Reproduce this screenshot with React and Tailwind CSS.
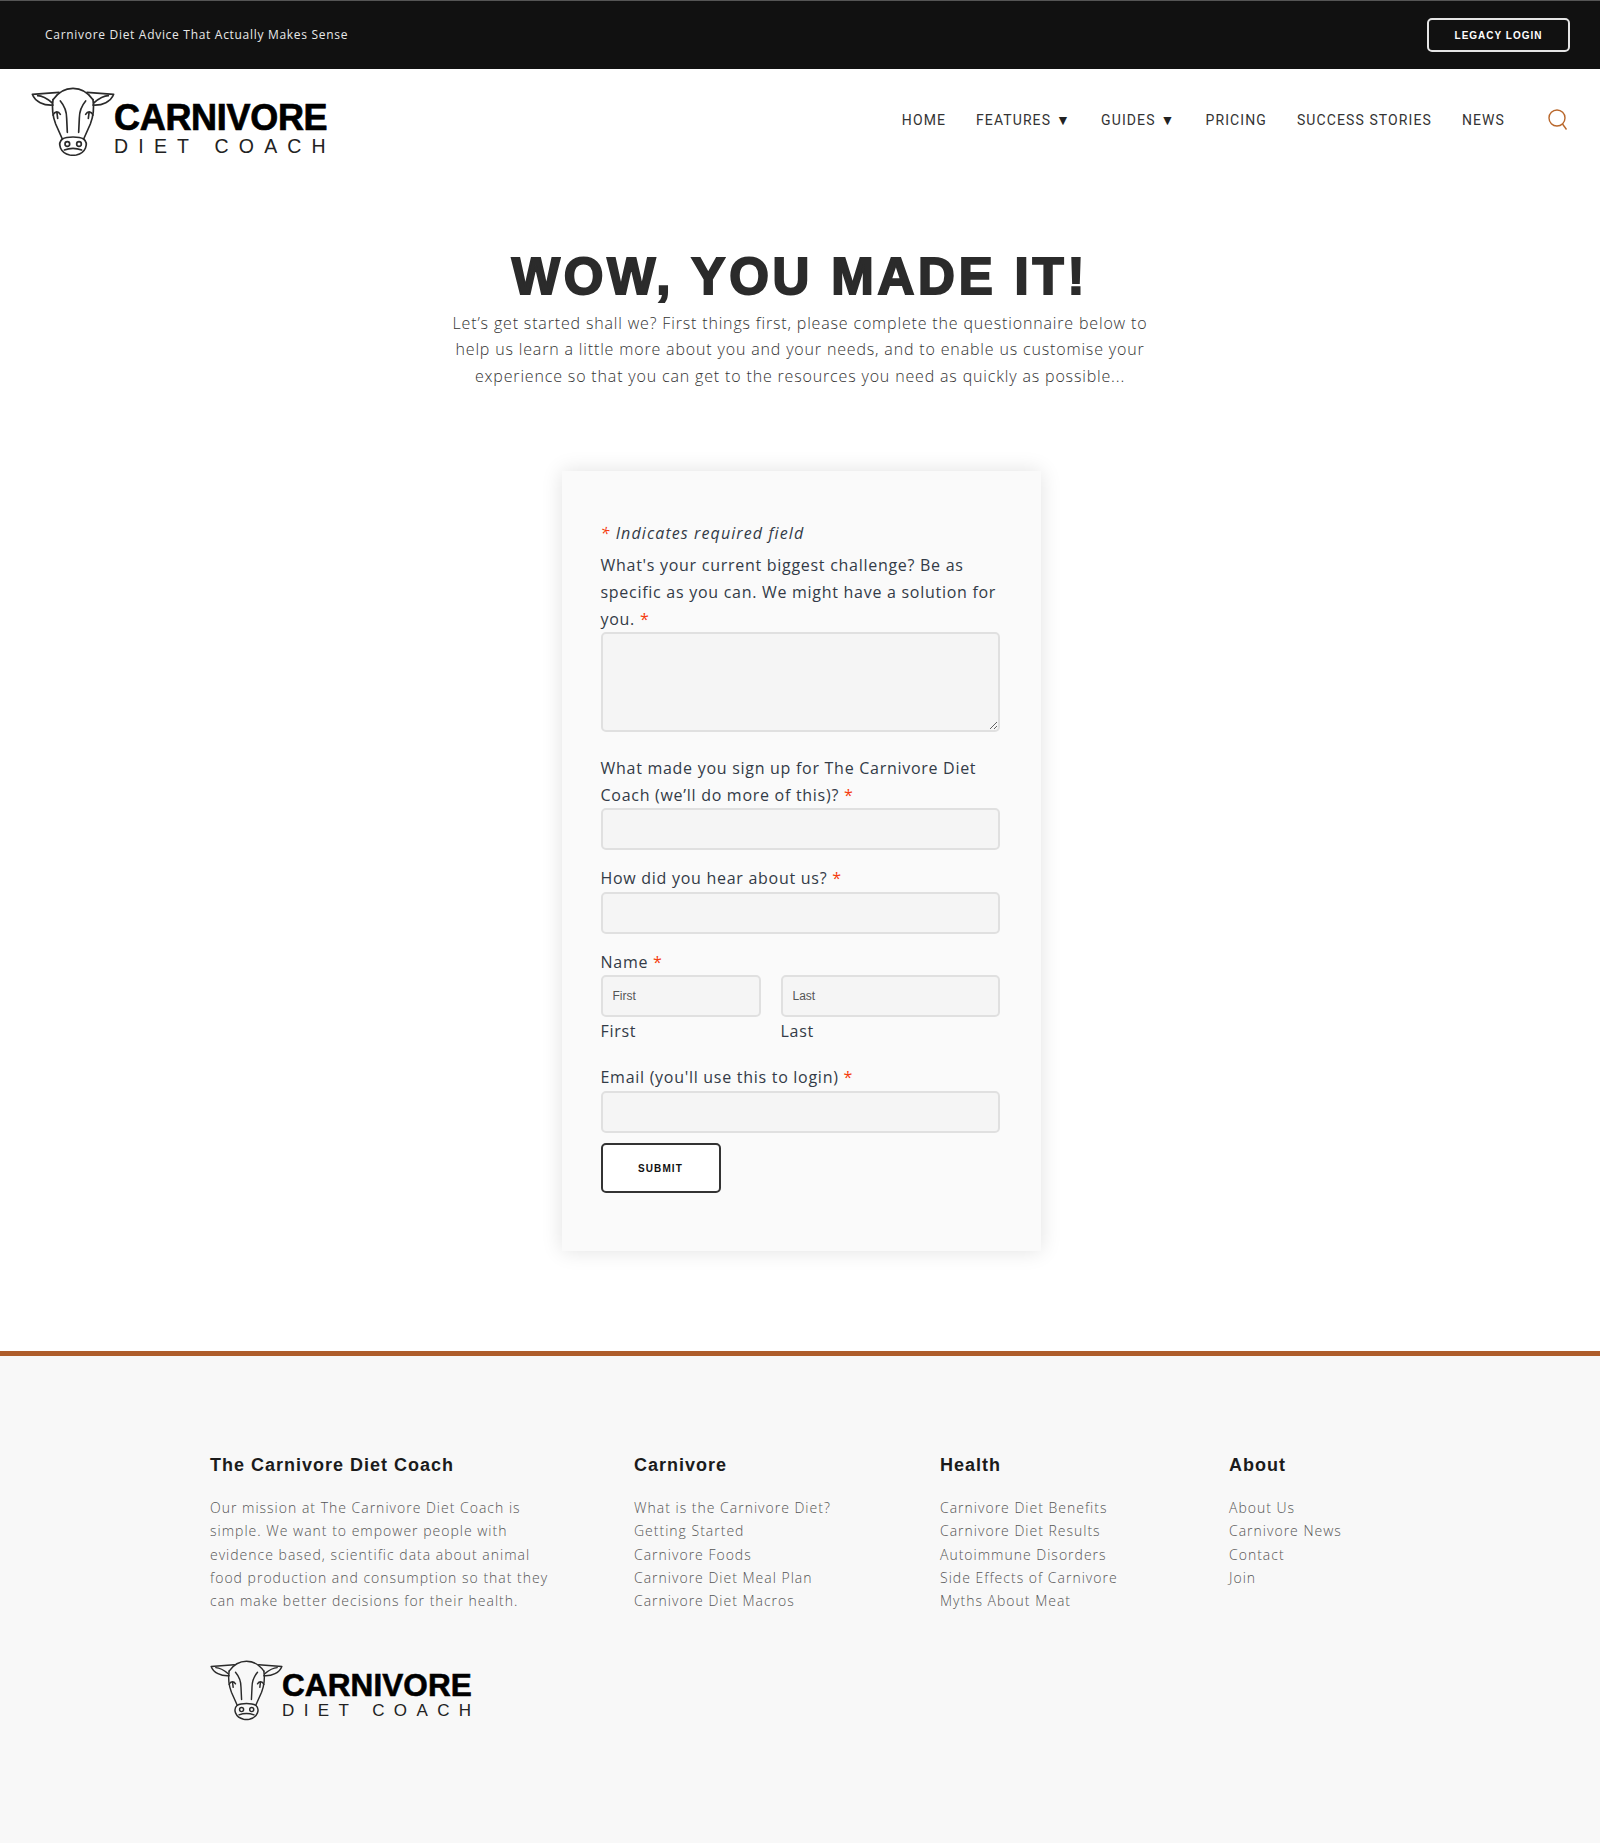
import React from 'react'

const CowHead = ({ className }) => (
  <svg viewBox="34 24 252 210" className={className} fill="none" stroke="#2b2b2b" strokeWidth="5" strokeLinecap="round" strokeLinejoin="round">
    <path d="M100 62C118 36 140 28 160 28C180 28 202 36 220 62" />
    <path d="M118 40L38 46C46 68 72 80 100 78" />
    <path d="M202 40L282 46C274 68 248 80 220 78" />
    <path d="M54 50C66 50 84 60 98 72" />
    <path d="M266 50C254 50 236 60 222 72" />
    <path d="M100 62C96 90 100 115 108 135L128 180" />
    <path d="M220 62C224 90 220 115 212 135L192 180" />
    <path d="M122 66C134 80 141 96 141 118L143 160" />
    <path d="M198 66C186 80 179 96 179 118L177 160" />
    <path d="M100 108C106 96 116 96 122 106M112 102L114 118" />
    <path d="M220 108C214 96 204 96 198 106M208 102L206 118" />
    <path d="M128 180C112 194 122 222 150 228C156 229 164 229 170 228C198 222 208 194 192 180C178 172 142 172 128 180Z" />
    <circle cx="143" cy="195" r="7" />
    <circle cx="178" cy="195" r="7" />
    <path d="M134 213C150 207 170 207 186 213" />
  </svg>
)

const Logo = ({ small }) => (
  <div className='flex items-start font-["Liberation_Sans",sans-serif] text-black'>
    <CowHead className={small ? 'w-[73px] h-[61px] shrink-0' : 'w-[84px] h-[70px] shrink-0'} />
    {small ? (
      <div className="ml-[-1px] mt-[10px]">
        <div className="text-[31.5px] leading-[30px] font-bold tracking-[0.1px] [-webkit-text-stroke:0.6px_black]">CARNIVORE</div>
        <div className="text-[17px] leading-[22px] tracking-[9.4px] whitespace-nowrap text-[#222]">DIET COACH</div>
      </div>
    ) : (
      <div className="ml-[-1px] mt-[13px]">
        <div className="text-[36px] leading-[36px] font-bold tracking-[-0.3px] [-webkit-text-stroke:0.7px_black]">CARNIVORE</div>
        <div className="text-[19.5px] leading-[20px] tracking-[10.2px] whitespace-nowrap text-[#222]">DIET COACH</div>
      </div>
    )}
  </div>
)

const NavItem = ({ children, arrow }) => (
  <a className="text-[14px] leading-[20px] tracking-[1.1px] text-[#333] uppercase whitespace-nowrap font-['Roboto',sans-serif]">
    {children}
    {arrow && <span className="ml-[5px] text-[14px] text-[#222]">▼</span>}
  </a>
)

const Star = () => <span className="text-[#f53c0c]">*</span>

const Label = ({ children, className = '' }) => (
  <div className={`text-[16px] leading-[27px] tracking-[0.72px] text-[#333b47] ${className}`}>{children}</div>
)

const inputCls = 'block w-full h-[42px] bg-[#f5f5f5] border-2 border-[#e0e0e0] rounded-[5px] px-[10px] text-[12px] font-["Liberation_Sans",sans-serif] placeholder:text-[#555] outline-none'

const FooterCol = ({ title, links, className }) => (
  <div className={className}>
    <h4 className="text-[18px] leading-[24px] font-bold tracking-[1px] text-[#1b1b1b] font-['Liberation_Sans',sans-serif]">{title}</h4>
    <ul className="mt-[19px] text-[14px] leading-[23.2px] tracking-[1px] font-light text-[#555]">
      {links.map((l) => (
        <li key={l}>{l}</li>
      ))}
    </ul>
  </div>
)

export default function App() {
  return (
    <div className="min-h-[1843px] bg-white font-['Open_Sans',sans-serif]">
      <div className="h-[69px] bg-[#111] border-t border-[#555] flex items-center justify-between pl-[45px] pr-[30px]">
        <span className="text-[12px] tracking-[0.7px] text-[#e8e8e8]">Carnivore Diet Advice That Actually Makes Sense</span>
        <a className="w-[143px] h-[34px] border-2 border-[#e5e5e5] rounded-[5px] flex items-center justify-center text-[10px] font-bold tracking-[1px] text-white font-['Liberation_Sans',sans-serif]">
          LEGACY LOGIN
        </a>
      </div>

      <header className="h-[90px] flex items-start justify-between pl-[31px] pr-[32px] pt-[18px]">
        <Logo />
        <div className="flex items-center gap-[30px] pt-[22px]">
          <NavItem>Home</NavItem>
          <NavItem arrow>Features</NavItem>
          <NavItem arrow>Guides</NavItem>
          <NavItem>Pricing</NavItem>
          <NavItem>Success Stories</NavItem>
          <NavItem>News</NavItem>
          <svg viewBox="0 0 20 22" className="w-[20px] h-[22px] ml-[13px]" fill="none" stroke="#b9672b" strokeWidth="1.4">
            <circle cx="9" cy="9" r="8" />
            <path d="M14.5 15L18.5 20.5" />
          </svg>
        </div>
      </header>

      <section className="pt-[88px] flex flex-col items-center text-center">
        <h1 className="text-[51px] leading-[60px] font-bold tracking-[3.8px] text-[#2b2b2b] font-['Liberation_Sans',sans-serif] [-webkit-text-stroke:2px_#2b2b2b]">WOW, YOU MADE IT!</h1>
        <p className="w-[720px] mt-[3px] text-[16px] leading-[26.4px] tracking-[0.84px] font-light text-[#333]">
          Let’s get started shall we? First things first, please complete the questionnaire below to help us learn a little more about you and your needs, and to enable us customise your experience so that you can get to the resources you need as quickly as possible...
        </p>
      </section>

      <div className="flex justify-center mt-[82px]">
        <form className="w-[479px] h-[780px] bg-[#fafafa] shadow-[0_0_20px_rgba(0,0,0,0.12)] pl-[39px] pr-[41px] pt-[49px] ml-[2px]">
          <div className="text-[16px] leading-[27px] tracking-[1.1px] italic text-[#333b47]"><Star /> Indicates required field</div>
          <Label className="mt-[5px]">What's your current biggest challenge? Be as specific as you can. We might have a solution for you. <Star /></Label>
          <textarea className="block w-full h-[100px] mt-[-1px] bg-[#f5f5f5] border-2 border-[#e0e0e0] rounded-[5px] outline-none" />
          <Label className="mt-[23px]">What made you sign up for The Carnivore Diet Coach (we’ll do more of this)? <Star /></Label>
          <div className="mt-[-1px]"><input className={inputCls} /></div>
          <Label className="mt-[15px]">How did you hear about us? <Star /></Label>
          <input className={inputCls} />
          <Label className="mt-[15px]">Name <Star /></Label>
          <div className="flex gap-[20px] mt-[-1px]">
            <div className="w-[160px]">
              <input className={inputCls} placeholder="First" />
              <Label className="mt-[1px]">First</Label>
            </div>
            <div className="flex-1">
              <input className={inputCls} placeholder="Last" />
              <Label className="mt-[1px]">Last</Label>
            </div>
          </div>
          <Label className="mt-[19px]">Email (you'll use this to login) <Star /></Label>
          <input className={inputCls} />
          <button type="button" className="block mt-[10px] w-[120px] h-[50px] border-2 border-[#333] rounded-[5px] bg-white text-[10px] font-bold tracking-[1.1px] text-[#111] font-['Liberation_Sans',sans-serif]">
            SUBMIT
          </button>
        </form>
      </div>

      <footer className="mt-[100px] h-[493px] bg-[#f8f8f8] border-t-[5px] border-[#ae5d2b] pt-[97px] pl-[210px]">
        <div className="flex">
          <div className="w-[424px]">
            <h4 className="text-[18px] leading-[24px] font-bold tracking-[1px] text-[#1b1b1b] font-['Liberation_Sans',sans-serif]">The Carnivore Diet Coach</h4>
            <p className="w-[350px] mt-[19px] text-[14px] leading-[23.2px] tracking-[1px] font-light text-[#555]">
              Our mission at The Carnivore Diet Coach is simple. We want to empower people with evidence based, scientific data about animal food production and consumption so that they can make better decisions for their health.
            </p>
            <div className="mt-[48px]"><Logo small /></div>
          </div>
          <FooterCol className="w-[306px]" title="Carnivore" links={['What is the Carnivore Diet?', 'Getting Started', 'Carnivore Foods', 'Carnivore Diet Meal Plan', 'Carnivore Diet Macros']} />
          <FooterCol className="w-[289px]" title="Health" links={['Carnivore Diet Benefits', 'Carnivore Diet Results', 'Autoimmune Disorders', 'Side Effects of Carnivore', 'Myths About Meat']} />
          <FooterCol title="About" links={['About Us', 'Carnivore News', 'Contact', 'Join']} />
        </div>
      </footer>
    </div>
  )
}
